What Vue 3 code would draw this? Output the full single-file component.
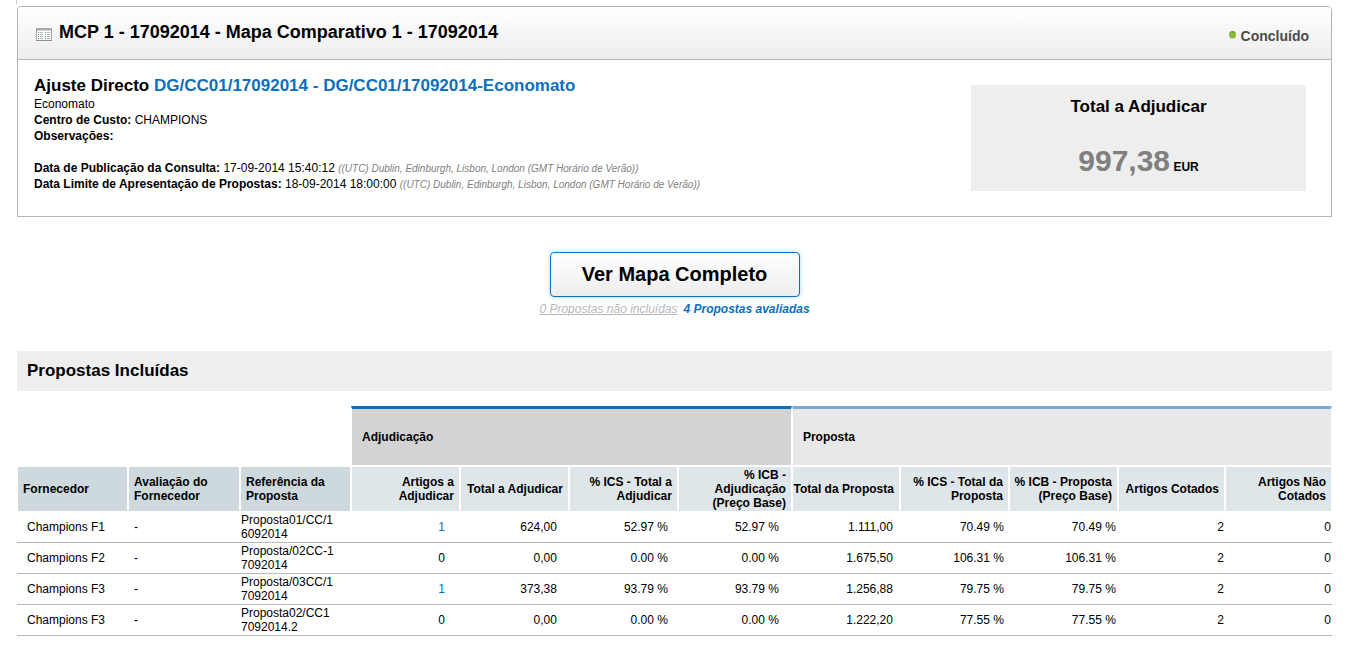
<script setup>
const timezone = '((UTC) Dublin, Edinburgh, Lisbon, London (GMT Horário de Verão))'

const columns = [
  { label: 'Fornecedor', size: 111 },
  { label: 'Avaliação do\nFornecedor', size: 112 },
  { label: 'Referência da\nProposta', size: 111 },
  { label: 'Artigos a\nAdjudicar', size: 109, numeric: true },
  { label: 'Total a Adjudicar', size: 109, numeric: true },
  { label: '% ICS - Total a\nAdjudicar', size: 109, numeric: true },
  { label: '% ICB -\nAdjudicação\n(Preço Base)', size: 114, numeric: true },
  { label: 'Total da Proposta', size: 108, numeric: true },
  { label: '% ICS - Total da\nProposta', size: 109, numeric: true },
  { label: '% ICB - Proposta\n(Preço Base)', size: 109, numeric: true },
  { label: 'Artigos Cotados', size: 107, numeric: true },
  { label: 'Artigos Não\nCotados', size: 107, numeric: true },
]
const totalSize = columns.reduce((sum, c) => sum + c.size, 0)

const rows = [
  ['Champions F1', '-', 'Proposta01/CC/1\n6092014', '1', '624,00', '52.97 %', '52.97 %', '1.111,00', '70.49 %', '70.49 %', '2', '0'],
  ['Champions F2', '-', 'Proposta/02CC-1\n7092014', '0', '0,00', '0.00 %', '0.00 %', '1.675,50', '106.31 %', '106.31 %', '2', '0'],
  ['Champions F3', '-', 'Proposta/03CC/1\n7092014', '1', '373,38', '93.79 %', '93.79 %', '1.256,88', '79.75 %', '79.75 %', '2', '0'],
  ['Champions F3', '-', 'Proposta02/CC1\n7092014.2', '0', '0,00', '0.00 %', '0.00 %', '1.222,20', '77.55 %', '77.55 %', '2', '0'],
]
</script>

<template>
  <main class="page">
    <div class="edge"></div>

    <section class="panel">
      <header class="panel-head">
        <svg class="map-icon" width="16" height="14" viewBox="0 0 16 14" aria-hidden="true">
          <rect x="0.5" y="0.5" width="15" height="12" rx="1" fill="#fbfbfb" stroke="#a8a8a8" />
          <rect x="0" y="0" width="16" height="2" fill="#a8a8a8" />
          <rect x="1" y="2" width="14" height="1" fill="#d6d6d6" />
          <rect x="0" y="12" width="16" height="1" fill="#8d8d8d" />
          <g fill="#b9b9b9">
            <rect x="4" y="4" width="3" height="1" />
            <rect x="4" y="6" width="3" height="1" />
            <rect x="4" y="8" width="3" height="1" />
            <rect x="4" y="10" width="3" height="1" />
            <rect x="11" y="4" width="3" height="1" />
            <rect x="11" y="6" width="3" height="1" />
            <rect x="11" y="8" width="3" height="1" />
            <rect x="11" y="10" width="3" height="1" />
          </g>
          <rect x="2" y="4" width="1" height="1" fill="#2f9e2f" />
          <rect x="2" y="6" width="1" height="1" fill="#d8584a" />
          <rect x="2" y="8" width="1" height="1" fill="#4a78d0" />
          <rect x="2" y="10" width="1" height="1" fill="#d8584a" />
          <rect x="9" y="4" width="1" height="1" fill="#4a90e2" />
          <rect x="9" y="6" width="1" height="1" fill="#f0a020" />
          <rect x="9" y="8" width="1" height="1" fill="#35a845" />
          <rect x="9" y="10" width="1" height="1" fill="#4a90e2" />
        </svg>
        <h1>MCP 1 - 17092014 - Mapa Comparativo 1 - 17092014</h1>
        <span class="status"><i class="dot"></i>Concluído</span>
      </header>

      <div class="panel-body">
        <div class="info">
          <h2>Ajuste Directo <a href="#">DG/CC01/17092014 - DG/CC01/17092014-Economato</a></h2>
          <p>Economato</p>
          <p><b>Centro de Custo:</b> CHAMPIONS</p>
          <p><b>Observações:</b></p>
          <p class="first-date"><b>Data de Publicação da Consulta:</b> 17-09-2014 15:40:12 <em>{{ timezone }}</em></p>
          <p><b>Data Limite de Apresentação de Propostas:</b> 18-09-2014 18:00:00 <em>{{ timezone }}</em></p>
        </div>
        <aside class="total">
          <h2>Total a Adjudicar</h2>
          <p><strong>997,38</strong> <b>EUR</b></p>
        </aside>
      </div>
    </section>

    <div class="actions">
      <button type="button">Ver Mapa Completo</button>
      <div class="links">
        <a class="excluded" href="#">0 Propostas não incluídas</a>
        <a class="rated" href="#">4 Propostas avaliadas</a>
      </div>
    </div>

    <h2 class="section-title">Propostas Incluídas</h2>

    <table>
      <colgroup>
        <col v-for="(c, i) in columns" :key="i" :style="{ width: (c.size / totalSize) * 100 + '%' }" />
      </colgroup>
      <thead>
        <tr class="groups">
          <td colspan="3"></td>
          <th class="award" colspan="4" scope="colgroup">Adjudicação</th>
          <th class="offer" colspan="5" scope="colgroup">Proposta</th>
        </tr>
        <tr class="heads">
          <th v-for="c in columns" :key="c.label" :class="{ num: c.numeric }" scope="col">{{ c.label }}</th>
        </tr>
      </thead>
      <tbody>
        <tr v-for="(row, r) in rows" :key="r">
          <td v-for="(cell, i) in row" :key="i" :class="{ num: columns[i].numeric }">
            <a v-if="i === 3 && cell !== '0'" href="#">{{ cell }}</a>
            <template v-else>{{ cell }}</template>
          </td>
        </tr>
      </tbody>
    </table>
  </main>
</template>

<style>
body {
  background: #fff;
}
</style>

<style scoped>
.page {
  padding: 0 16px 0 17px;
  font: 12px/16px "Liberation Sans", Arial, sans-serif;
  color: #000;
}
h1, h2, p {
  margin: 0;
}
h2 {
  font-size: 17px;
  line-height: 20px;
}
a {
  color: #0b6fbd;
  text-decoration: none;
}
.edge {
  height: 4px;
  margin: 0 0 2px -1px;
  border-left: 1px solid #ccc;
}
.panel {
  border: 1px solid #b5b5b5;
  border-radius: 4px 4px 0 0;
}
.panel-head {
  display: flex;
  align-items: center;
  height: 52px;
  padding: 0 22px 0 18px;
  border-bottom: 1px solid #b5b5b5;
  border-radius: 3px 3px 0 0;
  background: linear-gradient(#fff, #ededed);
}
.map-icon {
  margin: 4px 7px 0 0;
}
h1 {
  font-size: 18px;
  line-height: 22px;
  padding-bottom: 3px;
}
.status {
  display: flex;
  align-items: center;
  margin-left: auto;
  padding-top: 5px;
  font-size: 14px;
  font-weight: bold;
  color: #4c4c4c;
}
.dot {
  width: 7px;
  height: 7px;
  margin: 0 5px 3px 0;
  border-radius: 50%;
  background: linear-gradient(#5f9a1c, #8fc43a 50%, #6fae0c);
  box-shadow: 0 1px 1px #ccc;
}
.panel-body {
  display: flex;
  justify-content: space-between;
  align-items: flex-start;
  padding: 25px 25px 24px 16px;
}
.info {
  margin-top: -9px;
}
.info em {
  font-size: 10px;
  line-height: 12px;
  color: #808080;
}
.first-date {
  margin-top: 16px;
}
.total {
  width: 335px;
  height: 106px;
  background: #eee;
  text-align: center;
}
.total h2 {
  padding-top: 12px;
}
.total p {
  margin-top: 25px;
  line-height: 38px;
}
.total strong {
  font-size: 30px;
  color: #808080;
}
.actions {
  padding: 35px 0 34px;
  text-align: center;
}
button {
  width: 250px;
  height: 45px;
  padding: 0 0 2px;
  border: 1px solid #0b6fbd;
  border-radius: 4px;
  background: linear-gradient(#fff, #ededed);
  box-shadow: 0 0 5px #a9dcf0;
  font: bold 20px/24px "Liberation Sans", Arial, sans-serif;
  color: #000;
}
.links {
  display: flex;
  justify-content: center;
  gap: 6px;
  padding-top: 4px;
  font-style: italic;
}
.excluded {
  color: #b8b8b8;
  text-decoration: underline;
}
.rated {
  font-weight: bold;
}
.section-title {
  padding: 10px;
  background: #eee;
}
table {
  width: 100%;
  margin-top: 15px;
  table-layout: fixed;
  border-spacing: 0;
  line-height: 14px;
}
th, td {
  padding: 0;
  text-align: left;
  white-space: pre;
}
.groups th {
  height: 56px;
  padding-left: 10px;
  border: 1px solid #fff;
}
.groups .award {
  border-top: 3px solid #0b6fbd;
  background: #d3d3d3;
}
.groups .offer {
  border-top: 3px solid #7caad4;
  background: #e8e8e8;
}
.heads th {
  height: 44px;
  padding-left: 5px;
  border: 1px solid #fff;
  background: #cdd9dd;
}
.heads .num {
  padding: 0 5px 0 0;
  background: #dee6e9;
}
.num {
  text-align: right;
}
tbody td {
  height: 30px;
  border-bottom: 1px solid #b9b9b9;
}
tbody td:nth-child(1) { padding-left: 10px; }
tbody td:nth-child(2) { padding-left: 6px; }
tbody td:nth-child(3) { padding-left: 1px; }
tbody td:nth-child(4) { padding-right: 15px; }
tbody td:nth-child(5) { padding-right: 12px; }
tbody td:nth-child(6) { padding-right: 10px; }
tbody td:nth-child(7) { padding-right: 13px; }
tbody td:nth-child(8) { padding-right: 7px; }
tbody td:nth-child(9) { padding-right: 5px; }
tbody td:nth-child(10) { padding-right: 2px; }
tbody td:nth-child(11),
tbody td:nth-child(12) { padding-right: 1px; }
</style>
